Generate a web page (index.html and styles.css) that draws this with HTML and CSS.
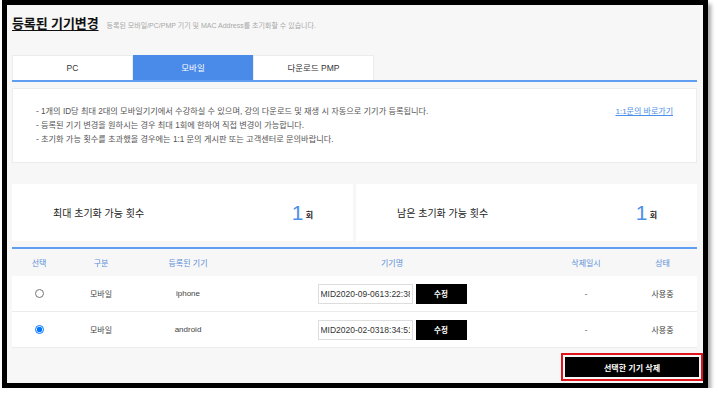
FILE: index.html
```html
<!DOCTYPE html>
<html lang="ko">
<head>
    <meta charset="UTF-8">
    <meta name="viewport" content="width=device-width, initial-scale=1.0">
    <title>등록된 기기변경</title>
    <link rel="stylesheet" href="styles.css">
</head>
<body>
    <div class="frame">
        <div class="page-head">
            <h1 class="page-title">등록된 기기변경</h1>
            <span class="page-desc">등록된 모바일/PC/PMP 기기 및 MAC Address를 초기화할 수 있습니다.</span>
        </div>

        <div class="tabs">
            <div class="tab">PC</div>
            <div class="tab active">모바일</div>
            <div class="tab">다운로드 PMP</div>
        </div>

        <div class="notice">
            <ul class="notice-list">
                <li>- 1개의 ID당 최대 2대의 모바일기기에서 수강하실 수 있으며, 강의 다운로드 및 재생 시 자동으로 기기가 등록됩니다.</li>
                <li>- 등록된 기기 변경을 원하시는 경우 최대 1회에 한하여 직접 변경이 가능합니다.</li>
                <li>- 초기화 가능 횟수를 초과했을 경우에는 1:1 문의 게시판 또는 고객센터로 문의바랍니다.</li>
            </ul>
            <a class="notice-link" href="#">1:1문의 바로가기</a>
        </div>

        <div class="stats">
            <div class="stat">
                <span class="stat-label">최대 초기화 가능 횟수</span>
                <span class="stat-value"><b>1</b> 회</span>
            </div>
            <div class="stat">
                <span class="stat-label">남은 초기화 가능 횟수</span>
                <span class="stat-value"><b>1</b> 회</span>
            </div>
        </div>

        <table class="devices">
            <colgroup>
                <col style="width:54px">
                <col style="width:70px">
                <col style="width:104px">
                <col style="width:304px">
                <col style="width:84px">
                <col style="width:69px">
            </colgroup>
            <thead>
                <tr>
                    <th>선택</th>
                    <th>구분</th>
                    <th>등록된 기기</th>
                    <th>기기명</th>
                    <th>삭제일시</th>
                    <th>상태</th>
                </tr>
            </thead>
            <tbody>
                <tr>
                    <td><input type="radio" name="device"></td>
                    <td>모바일</td>
                    <td>iphone</td>
                    <td>
                        <div class="name-edit">
                            <input type="text" class="name-input" value="MID2020-09-0613:22:38">
                            <button class="edit-btn">수정</button>
                        </div>
                    </td>
                    <td>-</td>
                    <td>사용중</td>
                </tr>
                <tr>
                    <td><input type="radio" name="device" checked></td>
                    <td>모바일</td>
                    <td>android</td>
                    <td>
                        <div class="name-edit">
                            <input type="text" class="name-input" value="MID2020-02-0318:34:51">
                            <button class="edit-btn">수정</button>
                        </div>
                    </td>
                    <td>-</td>
                    <td>사용중</td>
                </tr>
            </tbody>
        </table>

        <div class="actions">
            <button class="delete-btn">선택한 기기 삭제</button>
        </div>
    </div>
</body>
</html>
```

FILE: styles.css
```css
body {
    margin: 0;
    background-color: #ffffff;
    font-family: "Liberation Sans", "Noto Sans CJK KR", sans-serif;
    color: #333;
}
.frame {
    width: 685px;
    height: 369px;
    margin-left: 2px;
    padding: 9px 6px 0 5px;
    border: 5px solid #000;
    background-color: #f7f7f7;
    box-shadow: 3px 4px 4px rgba(0, 0, 0, 0.35);
    overflow: hidden;
}
.page-head {
    display: flex;
    align-items: baseline;
    gap: 8px;
    height: 20px;
}
.page-title {
    margin: 0;
    font-size: 13px;
    line-height: 20px;
    font-weight: bold;
    color: #111;
    letter-spacing: -0.1px;
    text-decoration: underline;
    text-underline-offset: 2px;
}
.page-desc {
    font-size: 7px;
    color: #a8a8a8;
}
.tabs {
    display: flex;
    margin-top: 21px;
    border-bottom: 2px solid #5f9ef3;
}
.tab {
    box-sizing: border-box;
    width: 121px;
    height: 25px;
    line-height: 24px;
    text-align: center;
    font-size: 8.5px;
    color: #333;
    background-color: #fff;
    border: 1px solid #ececec;
    border-bottom: none;
}
.tab.active {
    width: 120px;
    background-color: #4a8bea;
    border-color: #4a8bea;
    color: #fff;
}
.notice {
    display: flex;
    justify-content: space-between;
    align-items: center;
    height: 73px;
    margin-top: 6px;
    padding: 0 23px;
    background-color: #fff;
    border: 1px solid #ececec;
}
.notice-list {
    margin: 0;
    padding: 0;
    list-style: none;
    font-size: 8.2px;
    line-height: 14px;
    color: #555;
}
.notice-link {
    align-self: flex-start;
    margin-top: 16px;
    font-size: 8px;
    color: #4a8fe8;
}
.stats {
    display: grid;
    grid-template-columns: 1fr 1fr;
    gap: 3px;
    margin-top: 21px;
}
.stat {
    display: flex;
    justify-content: space-between;
    align-items: center;
    height: 57px;
    padding: 0 40px 0 41px;
    background-color: #fff;
}
.stat-label {
    font-size: 10px;
    color: #222;
}
.stat-value {
    font-size: 8px;
    font-weight: bold;
    color: #222;
}
.stat-value b {
    font-size: 21px;
    font-weight: normal;
    color: #4a8fe8;
    vertical-align: -2px;
}
.devices {
    width: 685px;
    margin-top: 6px;
    border-collapse: collapse;
    table-layout: fixed;
    border-top: 2px solid #5f9ef3;
    font-size: 8px;
}
.devices th {
    height: 27px;
    padding: 0;
    font-weight: normal;
    color: #5b8fd8;
}
.devices td {
    height: 35px;
    padding: 0;
    text-align: center;
    background-color: #fff;
    border-bottom: 1px solid #ececec;
    color: #444;
}
.devices input[type="radio"] {
    width: 9px;
    height: 9px;
    margin: 0;
    vertical-align: middle;
}
.name-edit {
    display: flex;
    justify-content: center;
    gap: 3px;
}
.name-input {
    width: 95px;
    height: 20px;
    box-sizing: border-box;
    padding: 0 2px;
    border: 1px solid #ddd;
    font-family: "Liberation Sans", sans-serif;
    font-size: 8.5px;
    color: #333;
}
.edit-btn {
    width: 51px;
    height: 20px;
    border: none;
    background-color: #000;
    color: #fff;
    font-family: "Noto Sans CJK KR", sans-serif;
    font-size: 7.5px;
    font-weight: bold;
}
.actions {
    display: flex;
    justify-content: flex-end;
    margin-top: 9px;
}
.delete-btn {
    width: 134px;
    height: 20px;
    margin-right: -2px;
    border: none;
    background-color: #000;
    color: #fff;
    font-family: "Noto Sans CJK KR", sans-serif;
    font-size: 8px;
    font-weight: bold;
    outline: 2px solid #e0151b;
    outline-offset: 2px;
}
```
